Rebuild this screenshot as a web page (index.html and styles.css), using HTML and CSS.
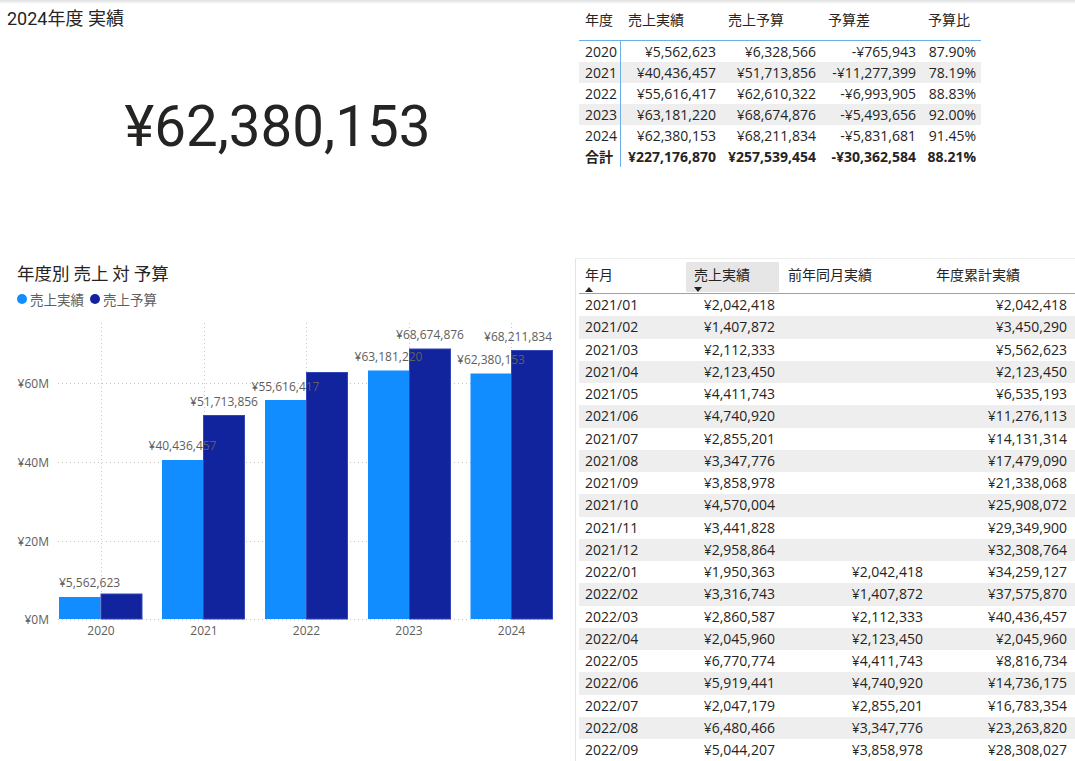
FILE: index.html
```html
<!DOCTYPE html>
<html lang="ja">
<head>
<meta charset="utf-8">
<title>売上レポート</title>
<link rel="stylesheet" href="styles.css">
</head>
<body>
<div class="topshade"></div>
<div class="page">
  <section class="kpi">
    <div class="kpi-title">2024年度 実績</div>
    <div class="kpi-value">¥62,380,153</div>
  </section>

  <section class="ytable">
    <div class="yrow yhead">
      <div>年度</div><div>売上実績</div><div>売上予算</div><div>予算差</div><div>予算比</div>
    </div>
    <div class="yrow"><div>2020</div><div>¥5,562,623</div><div>¥6,328,566</div><div>-¥765,943</div><div>87.90%</div></div>
    <div class="yrow alt"><div>2021</div><div>¥40,436,457</div><div>¥51,713,856</div><div>-¥11,277,399</div><div>78.19%</div></div>
    <div class="yrow"><div>2022</div><div>¥55,616,417</div><div>¥62,610,322</div><div>-¥6,993,905</div><div>88.83%</div></div>
    <div class="yrow alt"><div>2023</div><div>¥63,181,220</div><div>¥68,674,876</div><div>-¥5,493,656</div><div>92.00%</div></div>
    <div class="yrow"><div>2024</div><div>¥62,380,153</div><div>¥68,211,834</div><div>-¥5,831,681</div><div>91.45%</div></div>
    <div class="yrow total"><div>合計</div><div>¥227,176,870</div><div>¥257,539,454</div><div>-¥30,362,584</div><div>88.21%</div></div>
  </section>

  <section class="chart">
    <div class="chart-title">年度別 売上 対 予算</div>
    <div class="legend">
      <span class="dot light"></span><span class="lg-text">売上実績</span>
      <span class="dot dark"></span><span class="lg-text">売上予算</span>
    </div>
    <svg class="plot" width="575" height="340" viewBox="0 0 575 340">
      <g class="grid">
        <line x1="58" y1="73.5" x2="552" y2="73.5"/>
        <line x1="58" y1="152.5" x2="552" y2="152.5"/>
        <line x1="58" y1="231.5" x2="552" y2="231.5"/>
        <line x1="58" y1="309.5" x2="552" y2="309.5"/>
        <line x1="101.5" y1="13" x2="101.5" y2="309"/>
        <line x1="204.5" y1="13" x2="204.5" y2="309"/>
        <line x1="306.5" y1="13" x2="306.5" y2="309"/>
        <line x1="409.5" y1="13" x2="409.5" y2="309"/>
        <line x1="511.5" y1="13" x2="511.5" y2="309"/>
      </g>
      <g class="ylab">
        <text x="49" y="77.5">¥60M</text>
        <text x="49" y="156.5">¥40M</text>
        <text x="49" y="235.5">¥20M</text>
        <text x="49" y="313.5">¥0M</text>
      </g>
      <g class="bars">
        <rect class="b1" x="59" y="287" width="41.5" height="22"/>
        <rect class="b2" x="101" y="284" width="41" height="25"/>
        <rect class="b1" x="162" y="150" width="41.5" height="159"/>
        <rect class="b2" x="203.5" y="105.5" width="41" height="203.5"/>
        <rect class="b1" x="265" y="90" width="41.5" height="219"/>
        <rect class="b2" x="306.5" y="62.5" width="41" height="246.5"/>
        <rect class="b1" x="368" y="60.5" width="41.5" height="248.5"/>
        <rect class="b2" x="409.5" y="39" width="41" height="270"/>
        <rect class="b1" x="470.5" y="63.5" width="41" height="245.5"/>
        <rect class="b2" x="511.5" y="40.5" width="41" height="268.5"/>
      </g>
      <g class="dlab">
        <text x="59" y="277" class="st">¥5,562,623</text>
        <text x="182.5" y="140">¥40,436,457</text>
        <text x="224" y="95.5">¥51,713,856</text>
        <text x="285.5" y="80.5">¥55,616,417</text>
        <text x="388.5" y="50.5">¥63,181,220</text>
        <text x="430" y="29">¥68,674,876</text>
        <text x="491" y="53.5">¥62,380,153</text>
        <text x="552" y="31" class="en">¥68,211,834</text>
      </g>
      <g class="xlab">
        <text x="101" y="325">2020</text>
        <text x="204" y="325">2021</text>
        <text x="306.5" y="325">2022</text>
        <text x="409" y="325">2023</text>
        <text x="511.5" y="325">2024</text>
      </g>
    </svg>
  </section>

  <section class="mtable">
    <div class="mrow mhead">
      <div class="mh"><span>年月</span><i class="arrow up"></i></div>
      <div class="mh sel"><span>売上実績</span><i class="arrow down"></i></div>
      <div class="mh"><span>前年同月実績</span></div>
      <div class="mh"><span>年度累計実績</span></div>
    </div>
    <div class="mbody">
      <div class="mrow"><div>2021/01</div><div>¥2,042,418</div><div></div><div>¥2,042,418</div></div>
      <div class="mrow alt"><div>2021/02</div><div>¥1,407,872</div><div></div><div>¥3,450,290</div></div>
      <div class="mrow"><div>2021/03</div><div>¥2,112,333</div><div></div><div>¥5,562,623</div></div>
      <div class="mrow alt"><div>2021/04</div><div>¥2,123,450</div><div></div><div>¥2,123,450</div></div>
      <div class="mrow"><div>2021/05</div><div>¥4,411,743</div><div></div><div>¥6,535,193</div></div>
      <div class="mrow alt"><div>2021/06</div><div>¥4,740,920</div><div></div><div>¥11,276,113</div></div>
      <div class="mrow"><div>2021/07</div><div>¥2,855,201</div><div></div><div>¥14,131,314</div></div>
      <div class="mrow alt"><div>2021/08</div><div>¥3,347,776</div><div></div><div>¥17,479,090</div></div>
      <div class="mrow"><div>2021/09</div><div>¥3,858,978</div><div></div><div>¥21,338,068</div></div>
      <div class="mrow alt"><div>2021/10</div><div>¥4,570,004</div><div></div><div>¥25,908,072</div></div>
      <div class="mrow"><div>2021/11</div><div>¥3,441,828</div><div></div><div>¥29,349,900</div></div>
      <div class="mrow alt"><div>2021/12</div><div>¥2,958,864</div><div></div><div>¥32,308,764</div></div>
      <div class="mrow"><div>2022/01</div><div>¥1,950,363</div><div>¥2,042,418</div><div>¥34,259,127</div></div>
      <div class="mrow alt"><div>2022/02</div><div>¥3,316,743</div><div>¥1,407,872</div><div>¥37,575,870</div></div>
      <div class="mrow"><div>2022/03</div><div>¥2,860,587</div><div>¥2,112,333</div><div>¥40,436,457</div></div>
      <div class="mrow alt"><div>2022/04</div><div>¥2,045,960</div><div>¥2,123,450</div><div>¥2,045,960</div></div>
      <div class="mrow"><div>2022/05</div><div>¥6,770,774</div><div>¥4,411,743</div><div>¥8,816,734</div></div>
      <div class="mrow alt"><div>2022/06</div><div>¥5,919,441</div><div>¥4,740,920</div><div>¥14,736,175</div></div>
      <div class="mrow"><div>2022/07</div><div>¥2,047,179</div><div>¥2,855,201</div><div>¥16,783,354</div></div>
      <div class="mrow alt"><div>2022/08</div><div>¥6,480,466</div><div>¥3,347,776</div><div>¥23,263,820</div></div>
      <div class="mrow"><div>2022/09</div><div>¥5,044,207</div><div>¥3,858,978</div><div>¥28,308,027</div></div>
    </div>
  </section>
</div>
</body>
</html>
```

FILE: styles.css
```css
* { box-sizing: border-box; }
html, body {
  margin: 0;
  padding: 0;
  background: #ffffff;
  overflow: hidden;
}
body {
  width: 1075px;
  height: 761px;
  font-family: "Segoe UI", "Open Sans", "Noto Sans CJK JP", sans-serif;
  color: #252423;
}
.topshade {
  height: 4px;
  background: linear-gradient(#dedede, #f6f6f6 70%, #ffffff);
}
.page {
  display: grid;
  grid-template-columns: 575px 500px;
  grid-template-rows: 254px 503px;
}

/* KPI card */
.kpi {
  padding: 4px 27px 0 7px;
  display: flex;
  flex-direction: column;
}
.kpi-title {
  font-family: "Roboto", "Noto Sans CJK JP", sans-serif;
  font-size: 18px;
  line-height: 22px;
  color: #252423;
}
.kpi-value {
  margin-top: 68px;
  text-align: center;
  font-family: "Roboto", "Noto Sans CJK JP", sans-serif;
  font-weight: 400;
  font-size: 56.5px;
  line-height: 58px;
  color: #252423;
  letter-spacing: 0;
}

/* Year table */
.ytable {
  margin-left: 4px;
  width: 402px;
  font-size: 14px;
}
.yrow {
  display: grid;
  grid-template-columns: 42px 100px 100px 100px 60px;
  height: 21px;
  line-height: 21px;
  white-space: nowrap;
}
.yrow > div {
  text-align: right;
  padding-right: 5px;
}
.yrow > div:first-child {
  text-align: left;
  padding-left: 6px;
  padding-right: 0;
  border-right: 1px solid #6aaeea;
}
.yrow.alt { background: #eeeeee; }
.yrow.total { font-weight: 700; }
.yrow.yhead {
  height: 37px;
  line-height: 16px;
  border-bottom: 1px solid #6aaeea;
}
.yrow.yhead > div {
  text-align: left;
  padding: 8px 0 0 7px;
  border-right: none;
}
.yrow.yhead > div:first-child { padding-left: 6px; }

/* Chart */
.chart {
  padding: 4px 0 0 17px;
  position: relative;
  overflow: hidden;
}
.chart-title {
  font-family: "Noto Sans CJK JP", sans-serif;
  font-size: 17.5px;
  line-height: 22px;
  color: #252423;
}
.legend {
  margin-top: 6px;
  display: flex;
  align-items: center;
  height: 18px;
  font-family: "Noto Sans CJK JP", sans-serif;
  font-size: 13.5px;
  color: #605e5c;
}
.dot {
  width: 10px;
  height: 10px;
  border-radius: 50%;
  display: inline-block;
  margin-right: 3px;
}
.dot.light { background: #118dff; }
.dot.dark { background: #12239e; margin-left: 6px; }
.plot {
  display: block;
  margin: 2px 0 0 -17px;
}
.grid line {
  stroke: #c8c6c4;
  stroke-width: 1;
  stroke-dasharray: 1 3;
}
.ylab text {
  font-size: 12px;
  fill: #605e5c;
  text-anchor: end;
}
.xlab text {
  font-size: 12px;
  fill: #605e5c;
  text-anchor: middle;
}
.dlab text {
  font-size: 12px;
  fill: #605e5c;
  text-anchor: middle;
}
.dlab text.st { text-anchor: start; }
.dlab text.en { text-anchor: end; }
.b1 { fill: #118dff; }
.b2 { fill: #12239e; stroke: #3547b4; stroke-width: 1; }

/* Month table */
.mtable {
  border-left: 1px solid #e4e4e4;
  border-top: 1px solid #ececec;
  margin-top: 0;
  padding-left: 3px;
  overflow: hidden;
  font-size: 14px;
}
.mrow {
  display: grid;
  grid-template-columns: 104px 98px 148px 146px;
  height: 22.25px;
  line-height: 22px;
  white-space: nowrap;
}
.mrow > div {
  text-align: right;
  padding-right: 6px;
}
.mrow > div:first-child {
  text-align: left;
  padding-left: 6px;
}
.mrow > div:last-child { padding-right: 8px; }
.mrow.alt { background: #eeeeee; }
.mrow.mhead {
  height: 35px;
  border-bottom: 1px solid #6aaeea;
}
.mhead .mh {
  text-align: left;
  padding: 8px 0 0 7px;
  line-height: 16px;
  position: relative;
}
.mhead .mh:first-child { padding-left: 6px; }
.mhead .mh.sel {
  padding-left: 8px;
  background: #e6e6e6;
  margin: 3px 2px 1px 3px;
  padding-top: 5px;
}
.mhead .mh span { display: block; }
.arrow {
  display: block;
  width: 0;
  height: 0;
  margin-top: 4px;
  border-left: 4px solid transparent;
  border-right: 4px solid transparent;
}
.arrow.up { border-bottom: 5px solid #252423; }
.arrow.down { border-top: 5px solid #252423; }
.mbody { height: 467px; overflow: hidden; }
```
